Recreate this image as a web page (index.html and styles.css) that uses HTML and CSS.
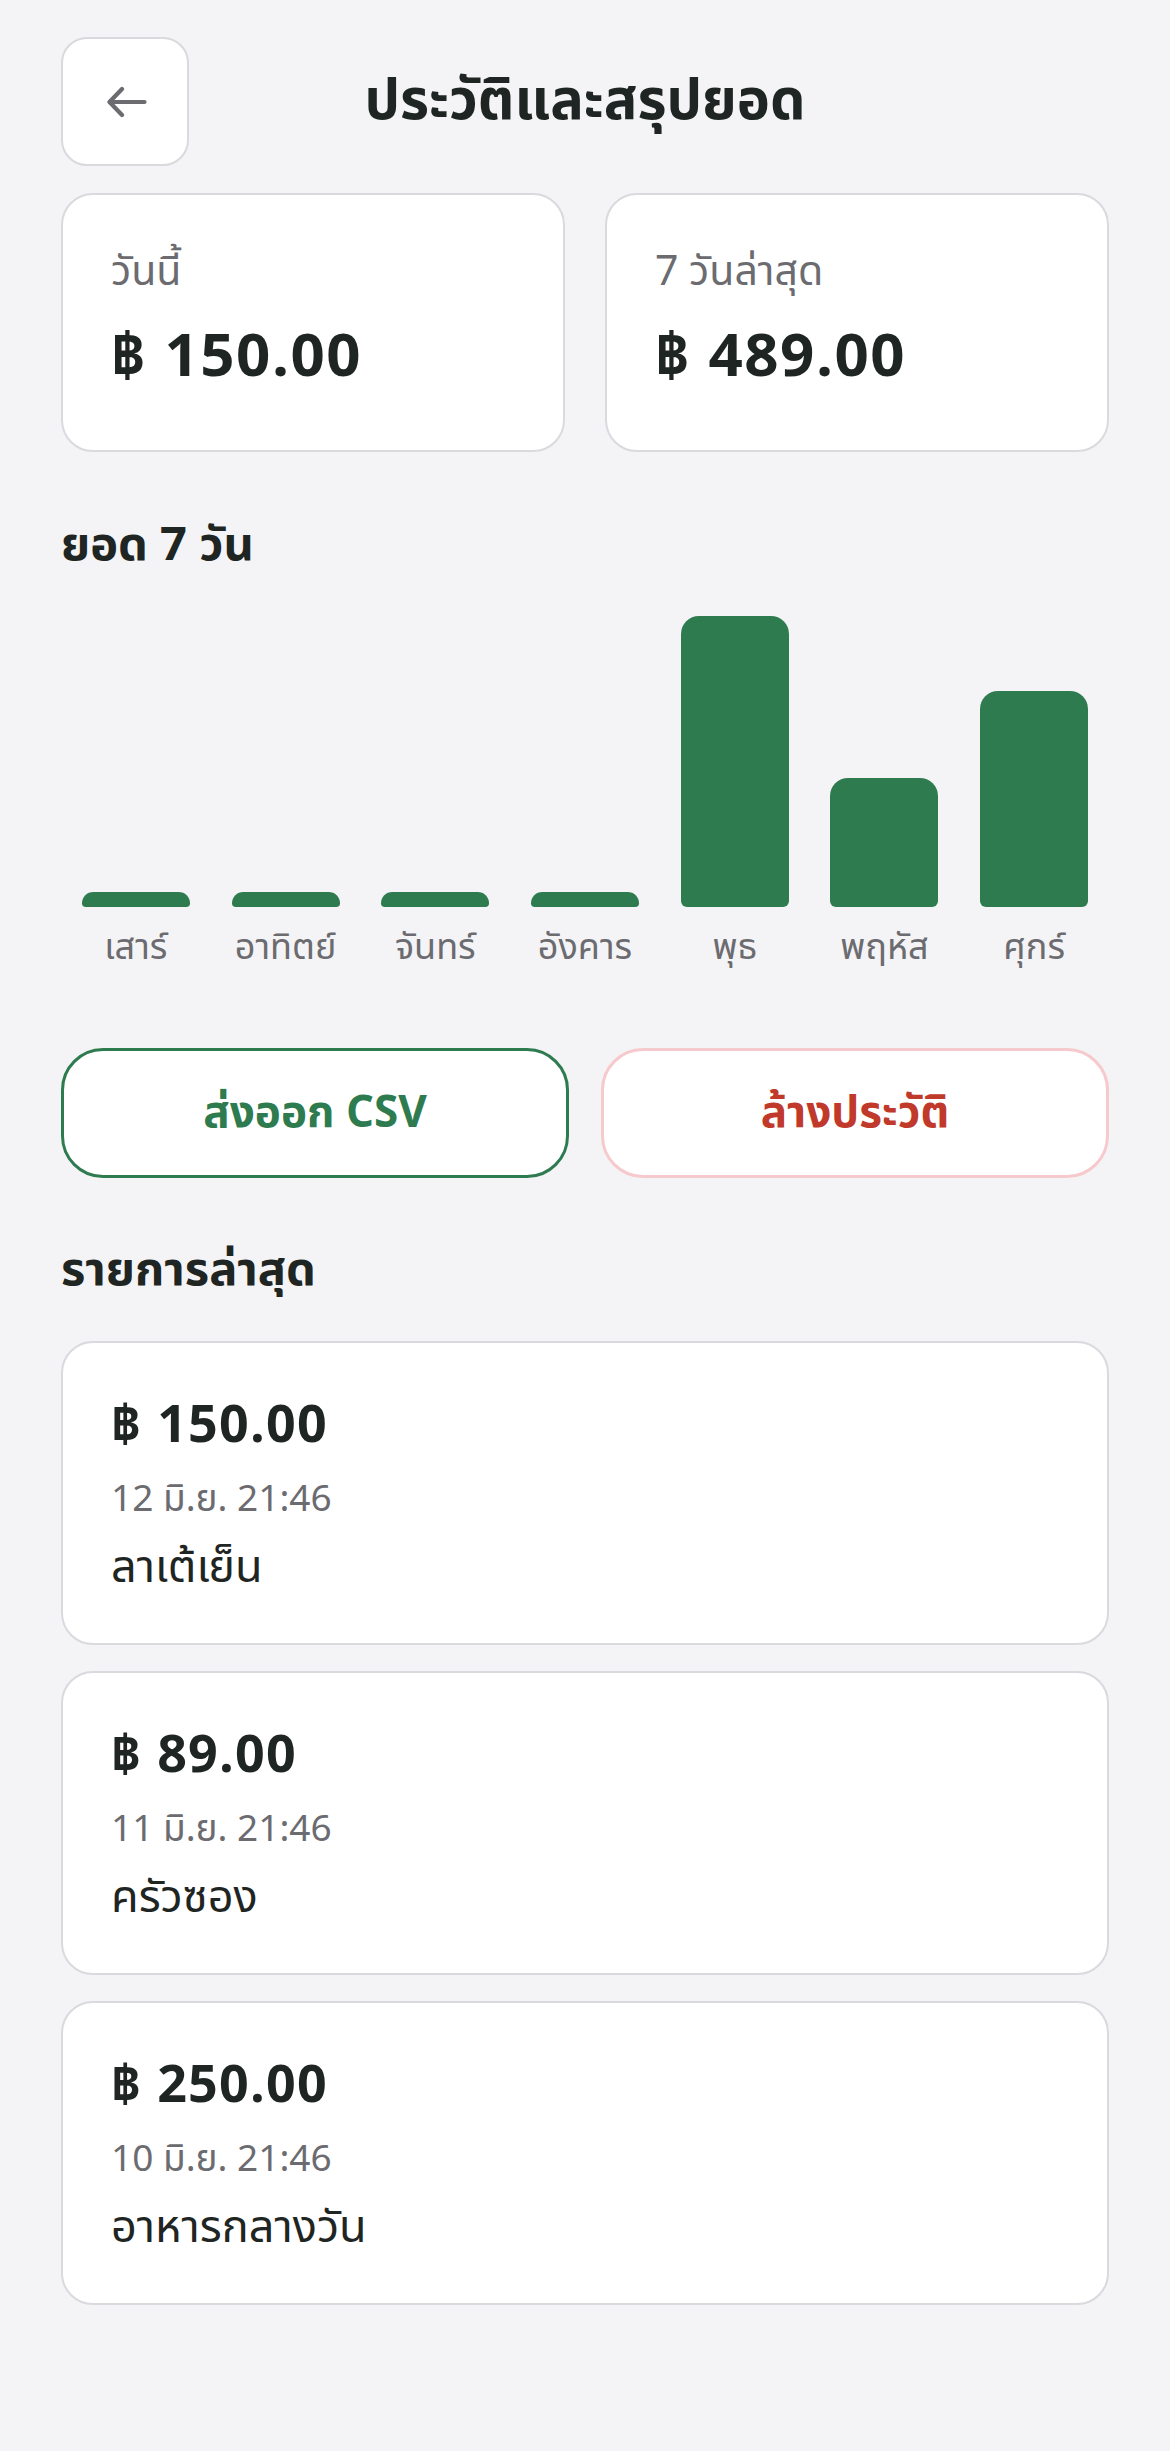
FILE: index.html
```html
<!DOCTYPE html>
<html lang="th">
<head>
<meta charset="utf-8">
<title>ประวัติและสรุปยอด</title>
<link rel="stylesheet" href="styles.css">
</head>
<body>
<div class="page">
  <header class="topbar">
    <button class="back" aria-label="กลับ">
      <svg width="40" height="32" viewBox="0 0 40 32" fill="none" stroke="#6b6b70" stroke-width="4.2" stroke-linecap="round" stroke-linejoin="round">
        <path d="M15 3 L2.5 16 L15 29"/>
        <path d="M3 16 H37.5"/>
      </svg>
    </button>
    <h1 class="title">ประวัติและสรุปยอด</h1>
    <div class="spacer"></div>
  </header>

  <section class="summary">
    <div class="stat">
      <div class="stat-label">วันนี้</div>
      <div class="stat-value">฿ 150.00</div>
    </div>
    <div class="stat">
      <div class="stat-label">7 วันล่าสุด</div>
      <div class="stat-value">฿ 489.00</div>
    </div>
  </section>

  <h2 class="section-title chart-title">ยอด 7 วัน</h2>
  <section class="chart">
    <div class="col"><div class="bar-area"><div class="bar" style="height:15px"></div></div><div class="day">เสาร์</div></div>
    <div class="col"><div class="bar-area"><div class="bar" style="height:15px"></div></div><div class="day">อาทิตย์</div></div>
    <div class="col"><div class="bar-area"><div class="bar" style="height:15px"></div></div><div class="day">จันทร์</div></div>
    <div class="col"><div class="bar-area"><div class="bar" style="height:15px"></div></div><div class="day">อังคาร</div></div>
    <div class="col"><div class="bar-area"><div class="bar" style="height:291px"></div></div><div class="day">พุธ</div></div>
    <div class="col"><div class="bar-area"><div class="bar" style="height:129px"></div></div><div class="day">พฤหัส</div></div>
    <div class="col"><div class="bar-area"><div class="bar" style="height:216px"></div></div><div class="day">ศุกร์</div></div>
  </section>

  <section class="actions">
    <button class="btn btn-export">ส่งออก CSV</button>
    <button class="btn btn-clear">ล้างประวัติ</button>
  </section>

  <h2 class="section-title list-title">รายการล่าสุด</h2>
  <section class="list">
    <article class="entry">
      <div class="entry-amount">฿ 150.00</div>
      <div class="entry-date">12 มิ.ย. 21:46</div>
      <div class="entry-name">ลาเต้เย็น</div>
    </article>
    <article class="entry">
      <div class="entry-amount">฿ 89.00</div>
      <div class="entry-date">11 มิ.ย. 21:46</div>
      <div class="entry-name">ครัวซอง</div>
    </article>
    <article class="entry">
      <div class="entry-amount">฿ 250.00</div>
      <div class="entry-date">10 มิ.ย. 21:46</div>
      <div class="entry-name">อาหารกลางวัน</div>
    </article>
  </section>
</div>
</body>
</html>
```

FILE: styles.css
```css
* { box-sizing: border-box; }
html, body { margin: 0; padding: 0; }
body {
  background: #f4f4f6;
  font-family: "Noto Sans Thai", "Noto Sans", "DejaVu Sans", sans-serif;
  color: #1f2522;
}
.page {
  width: 1170px;
  padding: 37px 61px 80px;
}
.topbar {
  display: grid;
  grid-template-columns: 128px 1fr 128px;
  align-items: center;
  height: 129px;
}
.back {
  width: 128px;
  height: 129px;
  border: 2px solid #d9d9de;
  border-radius: 26px;
  background: #fff;
  display: flex;
  align-items: center;
  justify-content: center;
  padding: 0 0 0 4px;
}
.title {
  margin: 0;
  text-align: center;
  font-size: 56px;
  font-weight: 700;
  line-height: 64px;
  color: #1f2522;
}
.summary {
  margin-top: 27px;
  display: grid;
  grid-template-columns: 1fr 1fr;
  gap: 40px;
}
.stat {
  background: #fff;
  border: 2px solid #d9d9de;
  border-radius: 32px;
  padding: 55px 48px 57px;
}
.stat-label {
  font-size: 41px;
  line-height: 44px;
  color: #6b6b70;
}
.stat-value {
  margin-top: 29px;
  font-size: 60px;
  line-height: 70px;
  font-weight: 700;
  letter-spacing: 1.5px;
  color: #1f2522;
}
.section-title {
  margin: 0;
  font-size: 47px;
  line-height: 56px;
  font-weight: 700;
  color: #1f2522;
}
.chart-title { margin-top: 66px; }
.chart {
  margin-top: 42px;
  display: grid;
  grid-template-columns: repeat(7, 1fr);
}
.col {
  display: flex;
  flex-direction: column;
  align-items: center;
}
.bar-area {
  height: 291px;
  width: 108px;
  display: flex;
  align-items: flex-end;
}
.bar {
  width: 100%;
  background: #2e7b50;
  border-radius: 18px 18px 6px 6px;
}
.day {
  margin-top: 19px;
  font-size: 36px;
  line-height: 44px;
  color: #6b6b70;
}
.actions {
  margin-top: 78px;
  display: grid;
  grid-template-columns: 1fr 1fr;
  gap: 32px;
}
.btn {
  height: 130px;
  border-radius: 42px;
  background: #fff;
  font-family: inherit;
  font-size: 44px;
  font-weight: 700;
  display: flex;
  align-items: center;
  justify-content: center;
}
.btn-export {
  border: 3px solid #2e7b50;
  color: #2e7b50;
}
.btn-clear {
  border: 3px solid #f6c9cd;
  color: #c0392b;
}
.list-title { margin-top: 65px; }
.list {
  margin-top: 42px;
  display: flex;
  flex-direction: column;
  gap: 26px;
}
.entry {
  background: #fff;
  border: 2px solid #d9d9de;
  border-radius: 32px;
  padding: 52px 48px 49px;
}
.entry-amount {
  font-size: 52px;
  line-height: 62px;
  font-weight: 700;
  letter-spacing: 1.2px;
  color: #1f2522;
}
.entry-date {
  margin-top: 17px;
  font-size: 37px;
  line-height: 52px;
  color: #6b6b70;
}
.entry-name {
  margin-top: 16px;
  font-size: 45px;
  line-height: 52px;
  color: #1f2522;
}
```
